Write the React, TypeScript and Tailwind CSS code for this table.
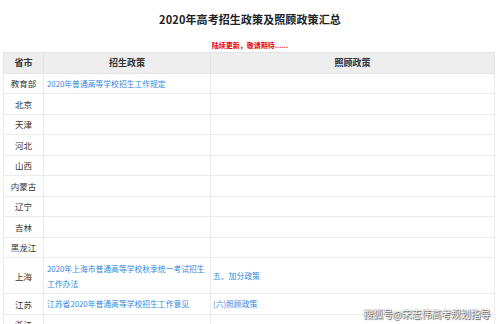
import React from 'react';

type Row = { name: string; admit?: string; care?: string; h?: string };

const rows: Row[] = [
  { name: '教育部', admit: '2020年普通高等学校招生工作规定' },
  { name: '北京' },
  { name: '天津' },
  { name: '河北' },
  { name: '山西' },
  { name: '内蒙古' },
  { name: '辽宁' },
  { name: '吉林' },
  { name: '黑龙江' },
  { name: '上海', admit: '2020年上海市普通高等学校秋季统一考试招生工作办法', care: '五、加分政策', h: 'h-[36px]' },
  { name: '江苏', admit: '江苏省2020年普通高等学校招生工作意见', care: '(六)照顾政策' },
  { name: '浙江' },
];

const App: React.FC = () => {
  return (
    <div className="relative w-[500px] h-[324px] overflow-hidden bg-white font-['Noto_Sans_CJK_SC',sans-serif]">
      <h1 className="pt-[11px] h-[38px] text-center text-[11px] leading-[16px] font-bold tracking-[0.1px] text-[#222]">
        2020年高考招生政策及照顾政策汇总
      </h1>
      <p className="h-[14px] text-center text-[7px] leading-[14px] font-bold text-[#e60012]">
        陆续更新，敬请期待......
      </p>
      <table className="ml-[3px] w-[492px] border-collapse table-fixed text-[#333]">
        <colgroup>
          <col className="w-[40px]" />
          <col className="w-[167px]" />
          <col />
        </colgroup>
        <thead>
          <tr className="h-[20.5px] bg-[#eeeeee] text-[9px] font-bold">
            <th className="border border-[#e4e4e4] font-bold leading-[12px]">省市</th>
            <th className="border border-[#e4e4e4] font-bold leading-[12px]">招生政策</th>
            <th className="border border-[#e4e4e4] font-bold leading-[12px]">照顾政策</th>
          </tr>
        </thead>
        <tbody>
          {rows.map((r) => (
            <tr key={r.name} className={r.h ?? 'h-[20.5px]'}>
              <td className="border border-[#ebebeb] text-center text-[8.5px] leading-[12px]">{r.name}</td>
              <td className="border border-[#ebebeb] px-[3px] text-[7.8px] leading-[15px] text-[#3189dc]">
                {r.admit}
              </td>
              <td className="border border-[#ebebeb] px-[2px] text-[7.8px] leading-[15px] text-[#3189dc]">
                {r.care}
              </td>
            </tr>
          ))}
        </tbody>
      </table>
      <div className="absolute right-[10px] bottom-[4px] text-[10px] leading-[12px] tracking-[-0.2px] text-white [text-shadow:0_0_1px_#444,1px_1px_1px_#555]">
        搜狐号@宋志伟高考规划指导
      </div>
    </div>
  );
};

export default App;
